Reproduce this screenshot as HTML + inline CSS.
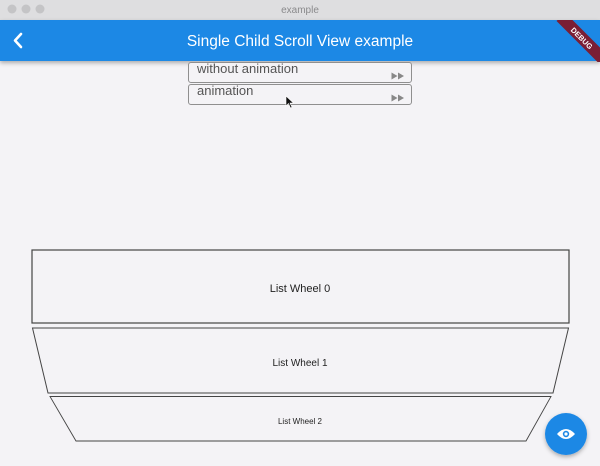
<!DOCTYPE html>
<html><head><meta charset="utf-8"><style>
html,body{margin:0;padding:0;width:600px;height:466px;overflow:hidden;background:#f4f3f6;font-family:"Liberation Sans",sans-serif}
</style></head><body>
<svg width="600" height="466" viewBox="0 0 600 466" xmlns="http://www.w3.org/2000/svg" style="display:block">
<defs>
<filter id="sh" x="-50%" y="-50%" width="200%" height="200%"><feDropShadow dx="0" dy="2" stdDeviation="2" flood-opacity="0.3"/></filter>
<clipPath id="bar"><rect x="0" y="20" width="600" height="42"/></clipPath>
</defs>
<rect width="600" height="466" fill="#f4f3f6"/>
<rect x="0" y="0" width="600" height="20" fill="#dedee0"/>
<circle cx="12" cy="9" r="4.5" fill="#c4c4c6"/>
<circle cx="26" cy="9" r="4.5" fill="#c4c4c6"/>
<circle cx="40" cy="9" r="4.5" fill="#c4c4c6"/>
<text x="300" y="13" text-anchor="middle" font-size="10" fill="#8a8a8c" font-family="Liberation Sans">example</text>
<rect x="0" y="20" width="600" height="41" fill="#1e88e5" filter="url(#sh)"/>
<path d="M21 34 L15 40.5 L21 47" stroke="#fff" stroke-width="2.6" fill="none" stroke-linecap="round" stroke-linejoin="round"/>
<text x="300" y="46" text-anchor="middle" font-size="15.5" fill="#fff" font-family="Liberation Sans">Single Child Scroll View example</text>
<g clip-path="url(#bar)">
<g transform="translate(582,38) rotate(45)">
<rect x="-30" y="-6" width="60" height="12" fill="#7a1e35"/>
<text x="0" y="3" text-anchor="middle" font-size="7.5" font-weight="bold" fill="#fff" font-family="Liberation Sans">DEBUG</text>
</g>
</g>
<rect x="188.5" y="62.5" width="223" height="20" rx="2.5" fill="#f4f3f6" stroke="#8f8f8f"/>
<text x="197" y="73" font-size="13" fill="#555" font-family="Liberation Sans">without animation</text>
<path d="M391.5 72.5 L397.5 76 L391.5 79.5Z M398 72.5 L404 76 L398 79.5Z" fill="#888"/>
<rect x="188.5" y="84.5" width="223" height="20" rx="2.5" fill="#f4f3f6" stroke="#8f8f8f"/>
<text x="197" y="95" font-size="13" fill="#555" font-family="Liberation Sans">animation</text>
<path d="M391.5 94.5 L397.5 98 L391.5 101.5Z M398 94.5 L404 98 L398 101.5Z" fill="#888"/>
<path d="M286 96 L286 106 L288.5 103.5 L290.5 108 L292 107.3 L290 103 L293.5 103 Z" fill="#111" stroke="#fff" stroke-width="0.6"/>
<rect x="32" y="250" width="537" height="73" fill="none" stroke="#444" stroke-width="1.2"/>
<text x="300" y="292" text-anchor="middle" font-size="11" fill="#222" font-family="Liberation Sans">List Wheel 0</text>
<path d="M32.5 328 L568.5 328 L553 393 L48 393 Z" fill="none" stroke="#444" stroke-width="1"/>
<text x="300" y="366" text-anchor="middle" font-size="10" fill="#222" font-family="Liberation Sans">List Wheel 1</text>
<path d="M50 396.5 L551 396.5 L526 441 L76 441 Z" fill="none" stroke="#444" stroke-width="0.9"/>
<text x="300" y="424" text-anchor="middle" font-size="8" fill="#222" font-family="Liberation Sans">List Wheel 2</text>
<circle cx="566" cy="434" r="21" fill="#1e88e5" filter="url(#sh)"/>
<path d="M557 434 Q566 424 575 434 Q566 444 557 434 Z" fill="#fff"/>
<circle cx="566" cy="434" r="3.2" fill="#1e88e5"/>
<circle cx="566" cy="434" r="1.6" fill="#fff"/>
</svg>
</body></html>
